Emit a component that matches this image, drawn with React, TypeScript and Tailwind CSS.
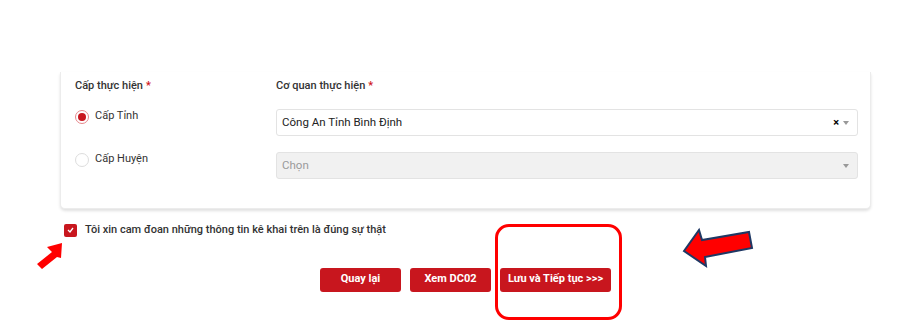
import React from "react";

function Radio({ checked, label }: { checked: boolean; label: string }) {
  return (
    <div className="flex items-start gap-[6px] pt-[1px]">
      {checked ? (
        <span className="flex h-[14px] w-[14px] items-center justify-center rounded-full border border-[#e6868a] bg-white">
          <span className="h-[8px] w-[8px] rounded-full bg-[#c8161e]" />
        </span>
      ) : (
        <span className="h-[14px] w-[14px] rounded-full border border-[#dddddd] bg-white" />
      )}
      <span className="text-[11px] leading-[12px] text-[#333]">{label}</span>
    </div>
  );
}

export default function App() {
  return (
    <div
      className="relative h-[329px] w-[911px] overflow-hidden bg-white"
      style={{ fontFamily: "Roboto, 'Noto Sans', sans-serif" }}
    >
      <div className="pt-[72px]">
        <div className="ml-[60px] w-[811px] rounded-b-[5px] border-x border-b border-[#ececec] bg-white pb-[29px] pl-[14px] pt-[4px] shadow-[0_2px_3px_rgba(0,0,0,0.12)]">
          <div className="grid grid-cols-[201px_582px]">
            <div className="flex h-[20px] items-center text-[11px] font-medium text-[#333]">
              Cấp thực hiện <span className="ml-[3px] text-[#d0131a]">*</span>
            </div>
            <div className="flex h-[20px] items-center text-[11px] font-medium text-[#333]">
              Cơ quan thực hiện <span className="ml-[3px] text-[#d0131a]">*</span>
            </div>

            <div className="mt-[13px]">
              <Radio checked label="Cấp Tỉnh" />
            </div>
            <div className="mt-[13px] flex h-[27px] items-center rounded-[3px] border border-[#e3e3e3] bg-white pl-[5px] pr-[8px]">
              <span className="flex-1 text-[11.5px] text-[#222]">Công An Tỉnh Bình Định</span>
              <span className="text-[11px] font-bold leading-none text-black">×</span>
              <span className="ml-[4px] h-0 w-0 border-x-[3px] border-t-[4px] border-x-transparent border-t-[#999]" />
            </div>

            <div className="mt-[16px]">
              <Radio checked={false} label="Cấp Huyện" />
            </div>
            <div className="mt-[16px] flex h-[27px] items-center rounded-[3px] border border-[#e3e3e3] bg-[#f1f1f1] pl-[5px] pr-[8px]">
              <span className="flex-1 text-[11.5px] text-[#9a9a9a]">Chọn</span>
              <span className="h-0 w-0 border-x-[3px] border-t-[4px] border-x-transparent border-t-[#999]" />
            </div>
          </div>
        </div>

        <div className="ml-[64px] mt-[13px] flex items-center gap-[8px]">
          <span className="flex h-[13px] w-[13px] items-center justify-center rounded-[2px] bg-[#c8161e]">
            <svg width="7" height="6" viewBox="0 0 7 6">
              <path d="M1 3 L3 5 L6 1" fill="none" stroke="white" strokeWidth="1.3" />
            </svg>
          </span>
          <span className="text-[11px] font-medium text-[#333]">
            Tôi xin cam đoan những thông tin kê khai trên là đúng sự thật
          </span>
        </div>

        <div className="ml-[60px] mt-[29px] flex w-[811px] justify-center gap-[9px]">
          <button className="h-[24px] w-[81px] rounded-[3px] bg-[#c8161e] text-[11px] font-bold text-white">
            Quay lại
          </button>
          <button className="h-[24px] w-[81px] rounded-[3px] bg-[#c8161e] text-[11px] font-bold text-white">
            Xem DC02
          </button>
          <button className="h-[24px] w-[111px] rounded-[3px] bg-[#c8161e] text-[11px] font-bold text-white">
            Lưu và Tiếp tục &gt;&gt;&gt;
          </button>
        </div>
      </div>

      {/* annotation: rounded red box */}
      <div className="absolute left-[495px] top-[224px] h-[96px] w-[127px] rounded-[14px] border-[3px] border-[#ff0000]" />

      {/* annotation: small arrow */}
      <svg className="absolute left-[34px] top-[240px]" width="32" height="32" viewBox="0 0 32 32">
        <polygon points="28,3 13,7 18,12 3,24 8,29 23,17 27,18" fill="#ff0000" />
      </svg>

      {/* annotation: big left arrow */}
      <svg className="absolute left-[680px] top-[226px]" width="76" height="44" viewBox="0 0 76 44">
        <polygon
          points="4,25 19,4 22,14 69,6 72,22 25,31 26,40"
          fill="#ff0000"
          stroke="#1f3864"
          strokeWidth="2"
          strokeLinejoin="miter"
        />
      </svg>
    </div>
  );
}
